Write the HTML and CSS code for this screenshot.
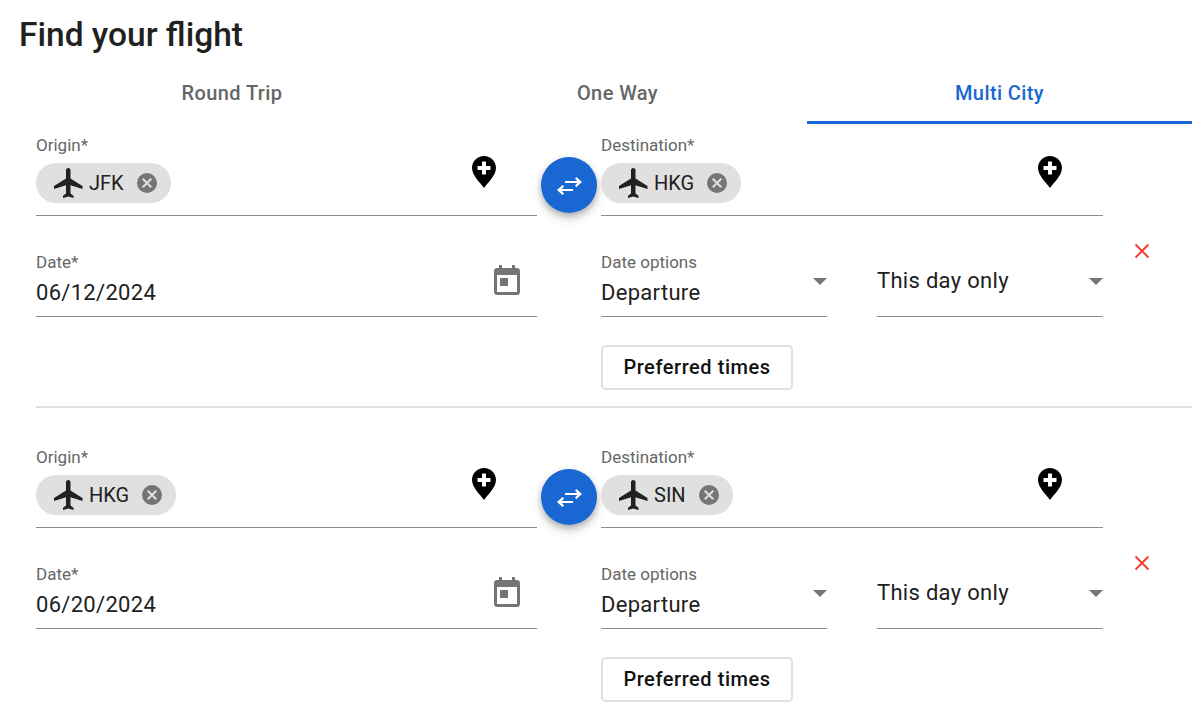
FILE: index.html
```html
<!DOCTYPE html>
<html>
<head>
    <title>Find your flight</title>
    <link rel="stylesheet" href="styles.css">
</head>
<body>
    <svg class="sprites" width="0" height="0">
        <symbol id="plane" viewBox="0 0 24 24"><path d="M21 16v-2l-8-5V3.500c0-.83-.67-1.500-1.500-1.500S10 2.670 10 3.500V9l-8 5v2l8-2.500V19l-2 1.500V22l3.500-1 3.500 1v-1.500L13 19v-5.500l8 2.500z"/></symbol>
        <symbol id="clear" viewBox="0 0 24 24"><path d="M12 2a10 10 0 1 0 0 20 10 10 0 0 0 0-20zm5 13.590L15.590 17 12 13.410 8.410 17 7 15.590 10.590 12 7 8.410 8.410 7 12 10.590 15.590 7 17 8.410 13.410 12 17 15.590z"/></symbol>
        <symbol id="pin" viewBox="0 0 24 32"><path fill-rule="evenodd" d="M12 0C5.400 0 0 5.300 0 11.800 0 19.500 8 26.500 12 32c4-5.500 12-12.500 12-20.200C24 5.300 18.600 0 12 0zm-2 5.500h4V10h4.500v4H14v4.500h-4V14H5.500v-4H10z"/></symbol>
        <symbol id="calendar" viewBox="0 0 26 30"><path fill-rule="evenodd" d="M5 0h3v3h10V0h3v3h2c1.700 0 3 1.300 3 3v21c0 1.700-1.300 3-3 3H3c-1.700 0-3-1.300-3-3V6c0-1.700 1.300-3 3-3h2zM3 10v17h20V10zm3 3h8v8H6z"/></symbol>
        <symbol id="swap" viewBox="0 0 26 26"><path d="M20.500 5 19 6.500 21.200 9H9v2h12.200L19 13.500 20.500 15 26 10zM6.500 13 1 18l5.500 5L8 21.500 5.800 19H17v-2H5.800L8 14.500z"/></symbol>
    </svg>

    <h1 class="title">Find your flight</h1>

    <div class="tabs">
        <div class="tab">Round Trip</div>
        <div class="tab">One Way</div>
        <div class="tab active">Multi City</div>
    </div>

    <div class="segment">
        <div class="route">
            <div class="field place">
                <label>Origin*</label>
                <div class="field-body">
                    <span class="chip"><svg class="chip-plane"><use href="#plane"/></svg>JFK<svg class="chip-clear"><use href="#clear"/></svg></span>
                    <svg class="pin"><use href="#pin"/></svg>
                </div>
            </div>
            <button class="swap"><svg><use href="#swap"/></svg></button>
            <div class="field place">
                <label>Destination*</label>
                <div class="field-body">
                    <span class="chip"><svg class="chip-plane"><use href="#plane"/></svg>HKG<svg class="chip-clear"><use href="#clear"/></svg></span>
                    <svg class="pin"><use href="#pin"/></svg>
                </div>
            </div>
        </div>
        <div class="dates">
            <div class="field date">
                <label>Date*</label>
                <div class="value">06/12/2024</div>
                <svg class="calendar"><use href="#calendar"/></svg>
            </div>
            <div class="options">
                <div class="option-row">
                    <div class="field select">
                        <label>Date options</label>
                        <div class="value">Departure</div>
                        <span class="caret"></span>
                    </div>
                    <div class="field select">
                        <div class="value">This day only</div>
                        <span class="caret"></span>
                    </div>
                </div>
                <button class="times">Preferred times</button>
            </div>
            <svg class="remove" viewBox="0 0 16 16"><path d="M1.500 1.500l13 13M14.500 1.500l-13 13"/></svg>
        </div>
    </div>

    <div class="segment">
        <div class="route">
            <div class="field place">
                <label>Origin*</label>
                <div class="field-body">
                    <span class="chip"><svg class="chip-plane"><use href="#plane"/></svg>HKG<svg class="chip-clear"><use href="#clear"/></svg></span>
                    <svg class="pin"><use href="#pin"/></svg>
                </div>
            </div>
            <button class="swap"><svg><use href="#swap"/></svg></button>
            <div class="field place">
                <label>Destination*</label>
                <div class="field-body">
                    <span class="chip"><svg class="chip-plane"><use href="#plane"/></svg>SIN<svg class="chip-clear"><use href="#clear"/></svg></span>
                    <svg class="pin"><use href="#pin"/></svg>
                </div>
            </div>
        </div>
        <div class="dates">
            <div class="field date">
                <label>Date*</label>
                <div class="value">06/20/2024</div>
                <svg class="calendar"><use href="#calendar"/></svg>
            </div>
            <div class="options">
                <div class="option-row">
                    <div class="field select">
                        <label>Date options</label>
                        <div class="value">Departure</div>
                        <span class="caret"></span>
                    </div>
                    <div class="field select">
                        <div class="value">This day only</div>
                        <span class="caret"></span>
                    </div>
                </div>
                <button class="times">Preferred times</button>
            </div>
            <svg class="remove" viewBox="0 0 16 16"><path d="M1.500 1.500l13 13M14.500 1.500l-13 13"/></svg>
        </div>
    </div>
</body>
</html>
```

FILE: styles.css
```css
html, body {
    height: 712px;
    overflow: hidden;
}
body {
    margin: 0;
    background: white;
    color: #212121;
    font-family: Roboto, "Liberation Sans", sans-serif;
}
.sprites {
    position: absolute;
}
.title {
    margin: 0;
    padding: 15px 0 0 19px;
    height: 59px;
    box-sizing: border-box;
    font-size: 33.5px;
    line-height: 40px;
    font-weight: 500;
}
.tabs {
    display: grid;
    grid-template-columns: 392px 379px 385px;
    margin-left: 36px;
    width: 1156px;
    height: 65px;
    box-sizing: border-box;
}
.tab {
    padding-top: 20px;
    text-align: center;
    font-size: 20px;
    line-height: 28px;
    font-weight: 500;
    letter-spacing: 0.4px;
    color: #666;
}
.tab.active {
    color: #1967d2;
    border-bottom: 3px solid #1967d2;
}
.segment {
    width: 1156px;
    height: 270px;
    margin-left: 36px;
    padding-top: 12px;
    margin-bottom: 28px;
    border-bottom: 2px solid #e0e0e0;
}
.segment:last-child {
    height: auto;
    margin-bottom: 0;
    border-bottom: none;
}
.route {
    display: flex;
    align-items: flex-start;
    gap: 4px;
    width: 1067px;
}
.field {
    position: relative;
    box-sizing: border-box;
    border-bottom: 1px solid #8c8c8c;
}
.field label {
    display: block;
    margin-bottom: 2px;
    font-size: 17px;
    line-height: 18px;
    color: #666;
}
.place {
    width: 501px;
    height: 80px;
}
.route .place:last-child {
    width: 502px;
}
.field-body {
    display: flex;
    align-items: flex-start;
    justify-content: space-between;
    padding: 7px 41px 0 0;
}
.chip {
    display: flex;
    align-items: center;
    height: 40px;
    padding: 0 12px 0 15px;
    border-radius: 20px;
    background: #e0e0e0;
    font-size: 20px;
}
.chip-plane {
    width: 36px;
    height: 36px;
    margin-right: 2px;
    fill: #212121;
}
.chip-clear {
    width: 24px;
    height: 24px;
    margin-left: 11px;
    fill: #757575;
}
.pin {
    width: 24px;
    height: 32px;
    margin-top: -7px;
    fill: black;
}
.swap {
    flex: none;
    width: 56px;
    height: 56px;
    margin-top: 21px;
    padding: 0;
    border: none;
    border-radius: 50%;
    background: #1967d2;
    box-shadow: 0 3px 6px rgba(0,0,0,0.25), 0 6px 12px rgba(0,0,0,0.12);
    cursor: pointer;
}
.swap svg {
    display: block;
    width: 26px;
    height: 26px;
    margin: 0 auto;
    fill: white;
}
.dates {
    display: flex;
    align-items: flex-start;
    margin-top: 37px;
}
.date {
    width: 501px;
    height: 64px;
    margin-right: 64px;
}
.value {
    font-size: 22px;
    line-height: 30px;
    letter-spacing: 0.3px;
}
.field label + .value {
    margin-top: 7px;
}
.calendar {
    position: absolute;
    right: 17px;
    top: 12px;
    width: 26px;
    height: 30px;
    fill: #757575;
}
.option-row {
    display: flex;
    gap: 50px;
}
.select {
    width: 226px;
    height: 64px;
}
.select:last-child .value {
    padding-top: 13px;
}
.caret {
    position: absolute;
    right: 0;
    top: 25px;
    border-left: 7px solid transparent;
    border-right: 7px solid transparent;
    border-top: 7px solid #757575;
}
.times {
    display: block;
    width: 192px;
    height: 45px;
    margin-top: 28px;
    padding: 0 0 2px;
    border: 2px solid #e0e0e0;
    border-radius: 5px;
    background: white;
    color: #111;
    font-family: Roboto, sans-serif;
    font-size: 20px;
    font-weight: 500;
    letter-spacing: 0.55px;
}
.remove {
    width: 16px;
    height: 16px;
    margin: -10px 0 0 31px;
    fill: none;
    stroke: #f44336;
    stroke-width: 2;
}
```
